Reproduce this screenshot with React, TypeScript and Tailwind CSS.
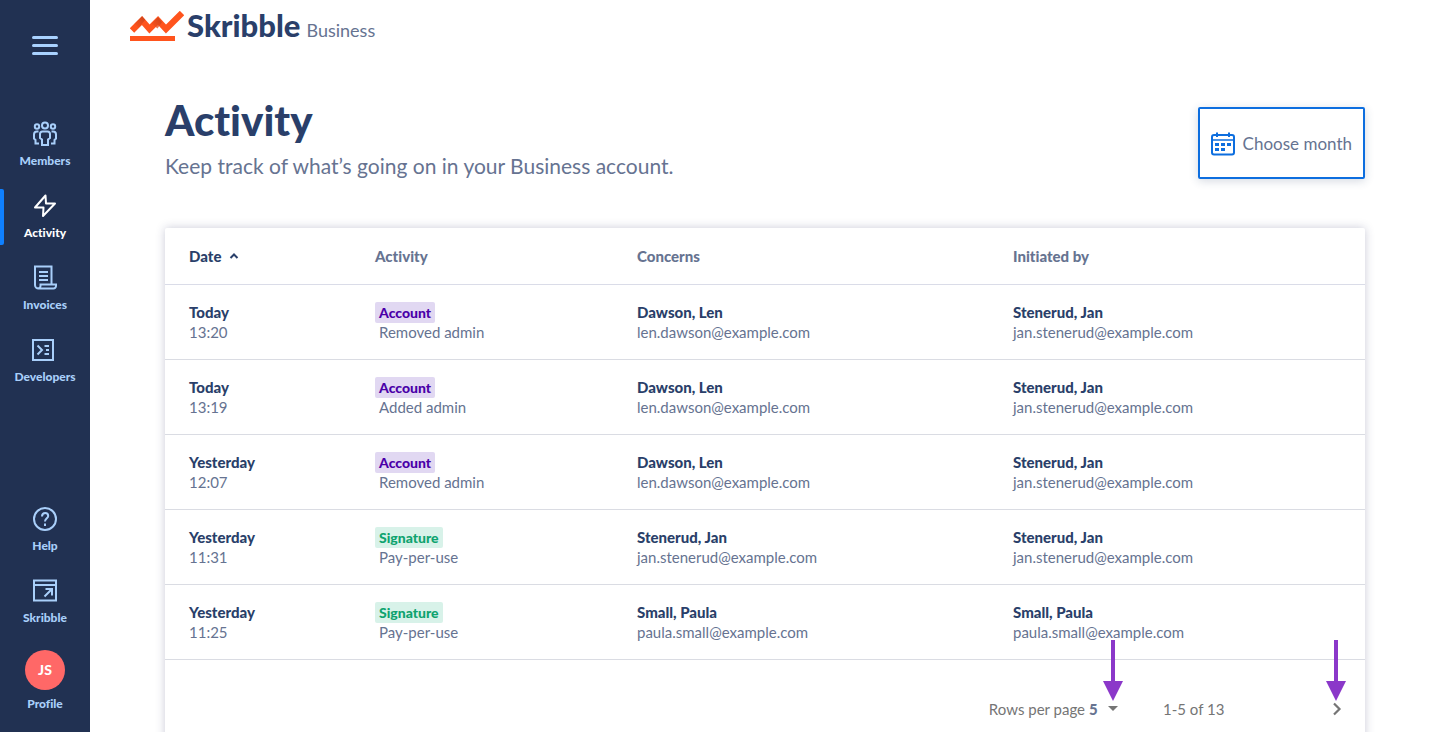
import { useState } from 'react';
import type { ReactNode } from 'react';
import clsx from 'clsx';

type IconProps = { className?: string };

function MembersIcon({ className }: IconProps) {
  return (
    <svg viewBox="0 0 26 26" fill="none" stroke="currentColor" strokeWidth="2" className={className} aria-hidden="true">
      <circle cx="13" cy="4.500" r="3" />
      <circle cx="5" cy="5.500" r="2.200" />
      <circle cx="21" cy="5.500" r="2.200" />
      <path d="M10.500 10.500h5a2.500 2.500 0 0 1 2.500 2.500v4l-2 1.500V24h-6v-5.500L8 17v-4a2.500 2.500 0 0 1 2.500-2.500z" />
      <path d="M6.500 10.500H5a3 3 0 0 0-3 3v4L3.500 19v3.500H7M19.500 10.500H21a3 3 0 0 1 3 3v4L22.500 19v3.500H19" />
    </svg>
  );
}

function BoltIcon({ className }: IconProps) {
  return (
    <svg viewBox="0 0 26 26" fill="none" stroke="currentColor" strokeWidth="2" strokeLinejoin="round" className={className} aria-hidden="true">
      <path d="M13.500 2.500 3 14.500h8.500l-.5 8.500L23 10.500h-9z" />
    </svg>
  );
}

function InvoiceIcon({ className }: IconProps) {
  return (
    <svg viewBox="0 0 26 26" fill="none" stroke="currentColor" strokeWidth="2" className={className} aria-hidden="true">
      <path d="M19.500 18.500V1.500H3v18.500a3.500 3.500 0 0 0 3.500 3.500h15a2.500 2.500 0 0 0 2.500-2.500v-1.500H8.500v1.500a2.500 2.500 0 0 1-2.500 2.500" />
      <path d="M7 7h9M7 11h9M7 15h9" />
    </svg>
  );
}

function DevelopersIcon({ className }: IconProps) {
  return (
    <svg viewBox="0 0 26 26" fill="none" stroke="currentColor" strokeWidth="2" className={className} aria-hidden="true">
      <path d="M1 3h20v20H1z" />
      <path d="m5.500 8.500 4.500 4.500-4.500 4.500" />
      <path d="M12.500 9H17M14 13h3M12.500 17H17" />
    </svg>
  );
}

function HelpIcon({ className }: IconProps) {
  return (
    <svg viewBox="0 0 26 26" fill="none" stroke="currentColor" strokeWidth="2" className={className} aria-hidden="true">
      <circle cx="13" cy="13" r="11" />
      <path d="M10 10.500c0-2 1.300-3.500 3.200-3.500s3 1.300 3 2.900c0 2.200-3.200 2.600-3.200 5.600" />
      <path d="M13 17.500V20" />
    </svg>
  );
}

function OpenAppIcon({ className }: IconProps) {
  return (
    <svg viewBox="0 0 26 26" fill="none" stroke="currentColor" strokeWidth="2" className={className} aria-hidden="true">
      <path d="M2 2.500h22v20H2zM2 7h22" />
      <path d="m12.500 18.500 7.500-7.500M13.500 11H20v6.500" />
    </svg>
  );
}

function CalendarIcon({ className }: IconProps) {
  return (
    <svg viewBox="0 0 24 24" fill="none" stroke="currentColor" className={className} aria-hidden="true">
      <rect x="1" y="3" width="22" height="19.500" rx="2" strokeWidth="2" />
      <path d="M1 8h22" strokeWidth="1.500" />
      <path d="M6 .5V5M18 .5V5" strokeWidth="2" />
      <path d="M4 12.500h4M10 12.500h4M16 12.500h4M4 17.500h4M10 17.500h4" strokeWidth="3" />
    </svg>
  );
}

function SkribbleMark({ className }: IconProps) {
  return (
    <svg viewBox="0 0 54 30" fill="none" className={className} aria-hidden="true">
      <defs>
        <linearGradient id="fold" x1="1" x2="0" y1="0" y2="1">
          <stop offset="0" stopColor="#b93d18" />
          <stop offset="1" stopColor="#ff541d" />
        </linearGradient>
      </defs>
      <path d="M2 19.500 12 9.500l7.500 8.500L28 9.500l8 8.500L52 2" stroke="#ff541d" strokeWidth="6.200" />
      <path d="M4.500 12.700 12 5.200l3.200 3.600-6.500 8z" fill="url(#fold)" opacity=".75" />
      <path d="M21.500 12.700 28 6.200l4 5-4.500 6.300z" fill="url(#fold)" opacity=".75" />
      <path d="M0 27.500h45" stroke="#ff541d" strokeWidth="5" />
    </svg>
  );
}

function PointerArrow({ className }: IconProps) {
  return (
    <svg viewBox="0 0 20 61" fill="#8b38c9" className={cn('pointer-events-none absolute h-[61px] w-5', className)} aria-hidden="true">
      <path d="M8 0h4v41h8L10 61 0 41h8z" />
    </svg>
  );
}

function cn(...classes: (string | undefined | false)[]) {
  return clsx(classes);
}

const mainNav = [
  { href: '#members', label: 'Members', icon: MembersIcon },
  { href: '#activity', label: 'Activity', icon: BoltIcon },
  { href: '#invoices', label: 'Invoices', icon: InvoiceIcon },
  { href: '#developers', label: 'Developers', icon: DevelopersIcon },
];

const footerNav = [
  { href: '#help', label: 'Help', icon: HelpIcon },
  { href: '#skribble', label: 'Skribble', icon: OpenAppIcon },
];

const len = { name: 'Dawson, Len', email: 'len.dawson@example.com' };
const jan = { name: 'Stenerud, Jan', email: 'jan.stenerud@example.com' };
const paula = { name: 'Small, Paula', email: 'paula.small@example.com' };

const activities = [
  { day: 'Today', time: '13:20', type: 'Account', action: 'Removed admin', concerns: len, by: jan },
  { day: 'Today', time: '13:19', type: 'Account', action: 'Added admin', concerns: len, by: jan },
  { day: 'Yesterday', time: '12:07', type: 'Account', action: 'Removed admin', concerns: len, by: jan },
  { day: 'Yesterday', time: '11:31', type: 'Signature', action: 'Pay-per-use', concerns: jan, by: jan },
  { day: 'Yesterday', time: '11:25', type: 'Signature', action: 'Pay-per-use', concerns: paula, by: paula },
];

function NavLink({ href, label, active, children }: { href: string; label: string; active?: boolean; children: ReactNode }) {
  return (
    <a
      href={href}
      className={cn(
        'relative flex flex-col items-center gap-1.5 py-1 text-xs leading-4 font-black',
        active ? 'text-white' : 'text-[#a9cffa]'
      )}
    >
      {active && <span className="absolute inset-y-0 left-0 w-1 rounded-r-xs bg-[#0f80ff]" />}
      {children}
      {label}
    </a>
  );
}

function Cell({ title, detail }: { title: string; detail: string }) {
  return (
    <td className="px-6 py-[17px]">
      <div className="font-black text-[#2a3f6a]">{title}</div>
      <div>{detail}</div>
    </td>
  );
}

export default function App() {
  const [rowsPerPage, setRowsPerPage] = useState('5');

  return (
    <div className="flex h-screen overflow-hidden bg-white font-['Lato',sans-serif] text-[#667391] [font-variant-ligatures:none]">
      {/* Sidebar */}
      <aside className="flex w-[90px] shrink-0 flex-col justify-between bg-[#213152] pt-9 pb-4">
        <div>
          <button aria-label="Toggle menu" className="mx-auto flex w-[26px] flex-col gap-[5px] text-[#a9d2ff]">
            <span className="h-[3px] w-full rounded-full bg-current" />
            <span className="h-[3px] w-full rounded-full bg-current" />
            <span className="h-[3px] w-full rounded-full bg-current" />
          </button>
          <nav className="mt-[62px] flex flex-col gap-4">
            {mainNav.map((item) => (
              <NavLink key={item.label} href={item.href} label={item.label} active={item.label === 'Activity'}>
                <item.icon className="size-[26px]" />
              </NavLink>
            ))}
          </nav>
        </div>
        <nav className="flex flex-col gap-4">
          {footerNav.map((item) => (
            <NavLink key={item.label} href={item.href} label={item.label}>
              <item.icon className="size-[26px]" />
            </NavLink>
          ))}
          <NavLink href="#profile" label="Profile">
            <span className="flex size-10 items-center justify-center rounded-full bg-[#ff6867] text-sm font-black text-white">
              JS
            </span>
          </NavLink>
        </nav>
      </aside>

      <div className="min-w-0 flex-1">
        {/* Brand */}
        <header className="flex h-[52px] px-10">
          <a href="#home" className="flex items-start gap-[3px] pt-[11px]">
            <SkribbleMark className="h-[30px] w-[54px]" />
            <span className="flex items-baseline gap-1.5 leading-7">
              <span className="text-[31px] leading-7 font-black text-[#2a3f6a]">Skribble</span>
              <span className="text-lg leading-7">Business</span>
            </span>
          </a>
        </header>

        <main className="mx-auto max-w-[1350px] px-[75px] pt-11">
          <div className="flex items-start justify-between">
            <div>
              <h1 className="text-[42px] leading-12 font-black text-[#2a3f6a]">Activity</h1>
              <p className="mt-2 text-[21px] leading-7">Keep track of what’s going on in your Business account.</p>
            </div>
            <button className="mt-[11px] flex h-[72px] items-center gap-2 rounded-xs border-2 border-[#0d6edf] px-[11px] pt-0.5 text-[17px] shadow-[0_2px_10px_rgba(42,63,106,0.2)]">
              <CalendarIcon className="size-6 text-[#0d6edf]" />
              Choose month
            </button>
          </div>

          <section className="mt-12 rounded-xs bg-white text-[15px] leading-5 shadow-[0_0_10px_rgba(42,48,100,0.25)]">
            <table className="w-full table-fixed text-left">
              <thead>
                <tr className="h-14 border-b border-[#dadce8]">
                  <th className="w-[186px] px-6 font-black text-[#2a3f6a]">
                    <button className="flex items-center gap-2">
                      Date
                      <svg viewBox="0 0 10 6" fill="none" stroke="currentColor" strokeWidth="2" className="h-1.5 w-2.5" aria-hidden="true">
                        <path d="m1.500 5 3.500-3.500L8.500 5" />
                      </svg>
                    </button>
                  </th>
                  <th className="w-[262px] px-6 font-black">Activity</th>
                  <th className="px-6 font-black">Concerns</th>
                  <th className="px-6 font-black">Initiated by</th>
                </tr>
              </thead>
              <tbody>
                {activities.map((row) => (
                  <tr key={row.time} className="border-b border-[#dadce3]">
                    <Cell title={row.day} detail={row.time} />
                    <td className="px-6 py-[17px]">
                      <div className="flex h-5">
                        <span
                          className={cn(
                            'h-[21px] rounded-xs px-1 text-sm leading-[21px] font-black',
                            row.type === 'Account' ? 'bg-[#e1d8f2] text-[#4a00a8]' : 'bg-[#d8f2e9] text-[#0fa36f]'
                          )}
                        >
                          {row.type}
                        </span>
                      </div>
                      <div className="pl-1">{row.action}</div>
                    </td>
                    <Cell title={row.concerns.name} detail={row.concerns.email} />
                    <Cell title={row.by.name} detail={row.by.email} />
                  </tr>
                ))}
              </tbody>
            </table>

            {/* Pagination */}
            <div className="flex h-[98px] items-center justify-end pr-4 text-[#757575]">
              <label htmlFor="rows-per-page">Rows per page</label>
              <div className="relative flex items-center">
                <select
                  id="rows-per-page"
                  value={rowsPerPage}
                  onChange={(e) => setRowsPerPage(e.target.value)}
                  className="w-[38px] appearance-none bg-transparent pl-1 font-black text-[#667391]"
                >
                  <option>5</option>
                  <option>10</option>
                  <option>25</option>
                </select>
                <svg viewBox="0 0 10 5" fill="currentColor" className="pointer-events-none absolute right-[5px] h-[5px] w-2.5" aria-hidden="true">
                  <path d="M0 0h10L5 5z" />
                </svg>
                <PointerArrow className="right-0 bottom-[18px]" />
              </div>
              <span className="w-[202px] pl-10">1-5 of 13</span>
              <div className="relative flex">
                <button aria-label="Next page" className="flex size-6 items-center justify-center">
                  <svg viewBox="0 0 10 14" fill="none" stroke="currentColor" strokeWidth="2.200" className="h-3.5 w-2.5" aria-hidden="true">
                    <path d="m2 1.500 5.500 5.500L2 12.500" />
                  </svg>
                </button>
                <PointerArrow className="right-[3px] bottom-5" />
              </div>
            </div>
          </section>
        </main>
      </div>
    </div>
  );
}
